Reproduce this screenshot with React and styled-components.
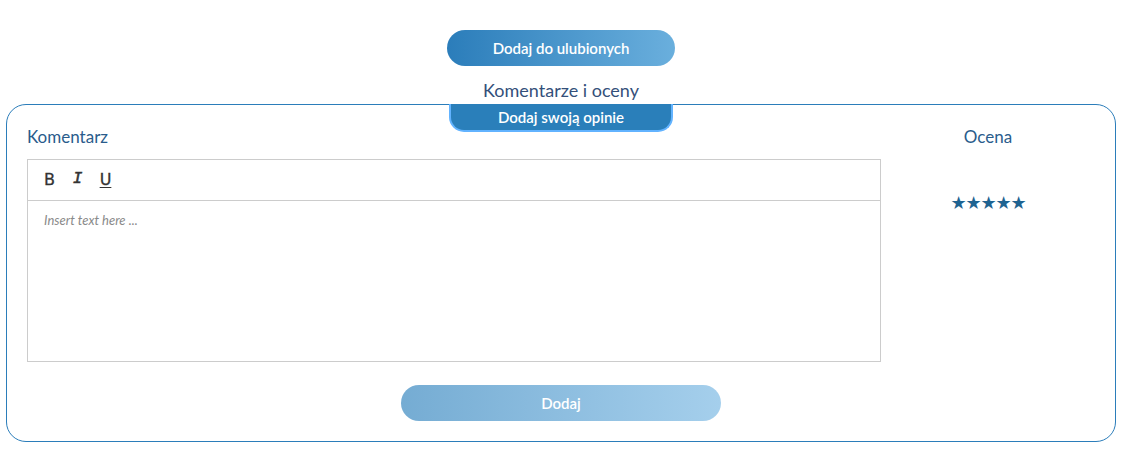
import React, { useState } from 'react'
import styled, { createGlobalStyle } from 'styled-components'

const GlobalStyle = createGlobalStyle`
  body {
    margin: 0;
    background: #ffffff;
    font-family: Lato, "Noto Sans", sans-serif;
  }
`

const Page = styled.div`
  width: 1125px;
  padding: 30px 9px 7px 6px;
  box-sizing: border-box;
  display: flex;
  flex-direction: column;
  align-items: center;
`

const PillButton = styled.button`
  width: ${({ wide }) => wide ? '320px' : '228px'};
  height: 36px;
  border: none;
  border-radius: 18px;
  background: ${({ faded }) => faded
    ? 'linear-gradient(to right, #75acd3, #a5cfec)'
    : 'linear-gradient(to right, #2b7dba, #6aafdd)'};
  color: #ffffff;
  font-family: inherit;
  font-size: 15px;
  font-weight: 600;
  cursor: pointer;
`

const SectionTitle = styled.div`
  margin-top: 13px;
  color: #34507a;
  font-size: 18px;
  line-height: 23px;
`

const Panel = styled.div`
  position: relative;
  align-self: stretch;
  margin-top: 2px;
  border: 1px solid #2b7dba;
  border-radius: 20px;
  padding: 21px 20px 20px 20px;
  display: flex;
  flex-direction: column;
  align-items: center;
`

const Tab = styled.div`
  position: absolute;
  top: -1px;
  left: 442px;
  width: 224px;
  height: 28px;
  box-sizing: border-box;
  background: #2a7fba;
  border: 2px solid #62b3ff;
  border-top: none;
  border-radius: 0 0 15px 15px;
  color: #ffffff;
  font-size: 15px;
  font-weight: 600;
  display: flex;
  align-items: center;
  justify-content: center;
`

const Columns = styled.div`
  align-self: stretch;
  display: flex;
`

const CommentColumn = styled.div`
  width: 854px;
  display: flex;
  flex-direction: column;
`

const RatingColumn = styled.div`
  flex: 1;
  display: flex;
  flex-direction: column;
  align-items: center;
`

const Label = styled.div`
  color: #2a5c8c;
  font-size: 17px;
  line-height: 21px;
  margin-bottom: 12px;
`

const Editor = styled.div`
  border: 1px solid #cccccc;
  height: 203px;
  box-sizing: border-box;
  display: flex;
  flex-direction: column;
`

const Toolbar = styled.div`
  height: 41px;
  border-bottom: 1px solid #cccccc;
  display: flex;
  align-items: center;
  padding: 0 0 2px 15px;
  box-sizing: border-box;
  gap: 15px;
`

const ToolButton = styled.span`
  width: 13px;
  text-align: center;
  font-family: ${({ italic }) => italic ? '"Liberation Mono", monospace' : '"DejaVu Sans", sans-serif'};
  font-size: 16px;
  color: #333333;
  font-weight: 400;
  font-style: ${({ italic }) => italic ? 'italic' : 'normal'};
  text-decoration: ${({ underline }) => underline ? 'underline' : 'none'};
  text-underline-offset: 2px;
  -webkit-text-stroke: ${({ italic }) => italic ? '0.6px' : '0.3px'} #333333;
  cursor: pointer;
`

const Placeholder = styled.div`
  padding: 11px 16px;
  font-size: 13px;
  font-style: italic;
  color: #8a8a8a;
`

const Stars = styled.div`
  margin-top: 35px;
  color: #1f6391;
  font-family: "DejaVu Sans", sans-serif;
  font-size: 18px;
  letter-spacing: -1.1px;
  line-height: 17px;
`

const Footer = styled.div`
  margin-top: 23px;
`

export default function App() {
  const [rating] = useState(5)

  return (
    <Page>
      <GlobalStyle />
      <PillButton>Dodaj do ulubionych</PillButton>
      <SectionTitle>Komentarze i oceny</SectionTitle>
      <Panel>
        <Tab>Dodaj swoją opinie</Tab>
        <Columns>
          <CommentColumn>
            <Label>Komentarz</Label>
            <Editor>
              <Toolbar>
                <ToolButton>B</ToolButton>
                <ToolButton italic>I</ToolButton>
                <ToolButton underline>U</ToolButton>
              </Toolbar>
              <Placeholder>Insert text here ...</Placeholder>
            </Editor>
          </CommentColumn>
          <RatingColumn>
            <Label>Ocena</Label>
            <Stars>{'★'.repeat(rating)}</Stars>
          </RatingColumn>
        </Columns>
        <Footer>
          <PillButton wide faded>Dodaj</PillButton>
        </Footer>
      </Panel>
    </Page>
  )
}
